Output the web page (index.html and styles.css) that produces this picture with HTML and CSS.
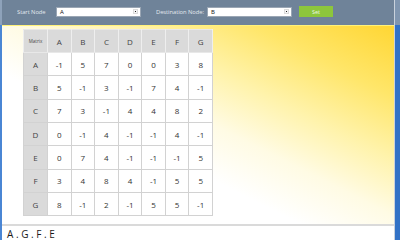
FILE: index.html
```html
<!DOCTYPE html>
<html lang="en">
<head>
  <meta charset="UTF-8" />
  <meta name="viewport" content="width=device-width, initial-scale=1" />
  <title>Shortest Path</title>
  <link rel="stylesheet" href="styles.css">
</head>
<body>

  <div class="window">
    <div class="edge-left"></div>

    <div class="frame">
      <div class="toolbar">
        <span class="field-label start">Start Node</span>
        <div class="select">
          <span>A</span>
          <span class="arrow"></span>
        </div>
        <span class="field-label dest">Destination Node:</span>
        <div class="select">
          <span>B</span>
          <span class="arrow"></span>
        </div>
        <button class="set-button">Set</button>
      </div>

      <div class="canvas">
        <table class="matrix">
          <thead>
            <tr>
              <th class="corner">Matrix</th>
              <th>A</th><th>B</th><th>C</th><th>D</th><th>E</th><th>F</th><th>G</th>
            </tr>
          </thead>
          <tbody>
            <tr><th>A</th><td>-1</td><td>5</td><td>7</td><td>0</td><td>0</td><td>3</td><td>8</td></tr>
            <tr><th>B</th><td>5</td><td>-1</td><td>3</td><td>-1</td><td>7</td><td>4</td><td>-1</td></tr>
            <tr><th>C</th><td>7</td><td>3</td><td>-1</td><td>4</td><td>4</td><td>8</td><td>2</td></tr>
            <tr><th>D</th><td>0</td><td>-1</td><td>4</td><td>-1</td><td>-1</td><td>4</td><td>-1</td></tr>
            <tr><th>E</th><td>0</td><td>7</td><td>4</td><td>-1</td><td>-1</td><td>-1</td><td>5</td></tr>
            <tr><th>F</th><td>3</td><td>4</td><td>8</td><td>4</td><td>-1</td><td>5</td><td>5</td></tr>
            <tr><th>G</th><td>8</td><td>-1</td><td>2</td><td>-1</td><td>5</td><td>5</td><td>-1</td></tr>
          </tbody>
        </table>
      </div>

      <div class="result">A . G . F . E</div>
    </div>

    <div class="edge-right"></div>
  </div>

</body>
</html>
```

FILE: styles.css
```css
body {
  margin: 0;
  font-family: "Open Sans", "Noto Sans", Arial, sans-serif;
  background-color: #ffffff;
  overflow: hidden;
}

.window {
  display: flex;
  width: 400px;
  height: 240px;
}

.edge-left {
  width: 2px;
  background: linear-gradient(#8ea2ba 0 25px, #4a86d4 25px);
}

.edge-right {
  width: 5px;
  border-left: 1px solid #c9d2dc;
  background: linear-gradient(#8096b0 0 25px, #3272c6 25px);
}

.frame {
  flex: 1;
  display: flex;
  flex-direction: column;
}

/* top bar */
.toolbar {
  height: 25px;
  background-color: #6f8399;
  display: flex;
  align-items: center;
  padding-left: 15px;
  padding-bottom: 1px;
  box-sizing: border-box;
}

.field-label {
  color: #e3e8ee;
  font-size: 5.8px;
  letter-spacing: -0.05px;
  white-space: nowrap;
  overflow: hidden;
}

.field-label.start {
  width: 39px;
}

.field-label.dest {
  width: 51px;
  margin-left: 15px;
}

.select {
  width: 85px;
  height: 10px;
  box-sizing: border-box;
  background: #ffffff;
  border: 1px solid #9aa6b4;
  display: flex;
  align-items: center;
  justify-content: space-between;
  padding: 0 2px 0 3px;
  font-size: 6px;
  color: #111;
}

.select .arrow {
  width: 5px;
  height: 5px;
  box-sizing: border-box;
  border: 1px solid #dcdcdc;
  background: #f4f4f4;
  position: relative;
}

.select .arrow::after {
  content: "";
  position: absolute;
  left: 1px;
  top: 1px;
  width: 1px;
  height: 1px;
  background: #222;
}

.set-button {
  margin-left: 7px;
  width: 34px;
  height: 11px;
  padding: 0;
  border: none;
  background-color: #8dc63c;
  color: #eef6e4;
  font-family: inherit;
  font-size: 5.5px;
}

/* matrix area */
.canvas {
  height: 202px;
  border-top: 1px solid #fff27a;
  border-bottom: 2px solid #dadada;
  background: linear-gradient(to bottom left, #ffd633 0%, #ffe66a 18%, #fff3ac 34%, #fffbe4 48%, #ffffff 62%);
  box-sizing: border-box;
  padding: 3px 0 0 21px;
}

.matrix {
  border-collapse: collapse;
  table-layout: fixed;
  width: 190px;
  border: 1px solid #c4c4c4;
  background: #ffffff;
}

.matrix th,
.matrix td {
  height: 22.3px;
  padding: 0;
  text-align: center;
  font-size: 8px;
  font-weight: normal;
  color: #333;
  border: 1px solid #d2d2d2;
}

.matrix th {
  background-color: #dadada;
  color: #444;
}

.matrix thead th {
  border-color: #e8e8e8 #eeeeee;
}

.matrix th.corner {
  width: 23px;
  font-size: 4.5px;
}

.result {
  padding: 2px 0 0 5px;
  font-size: 10px;
  line-height: 12px;
  color: #1a1a1a;
}
```
